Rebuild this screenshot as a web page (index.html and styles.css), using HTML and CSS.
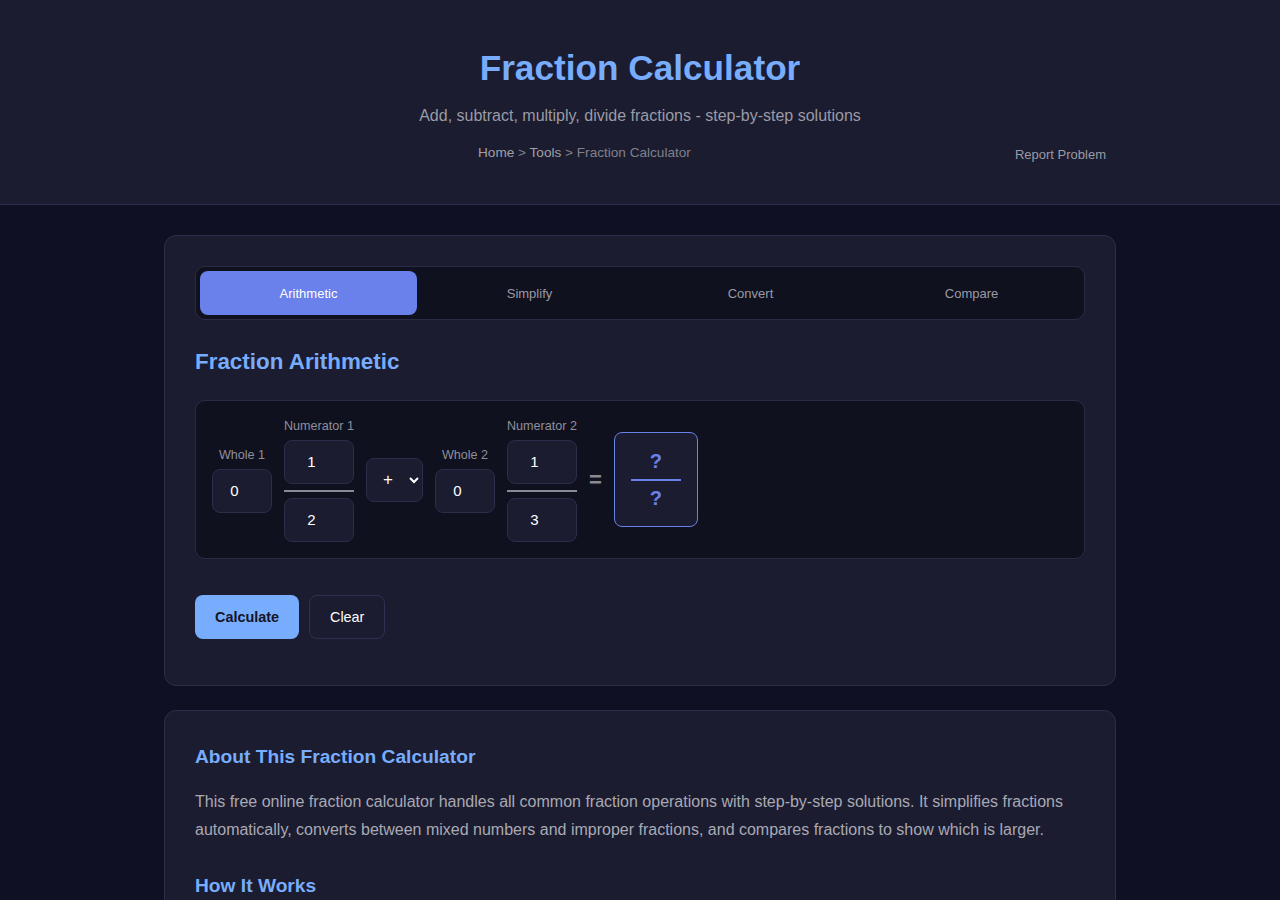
FILE: index.html
```html
<!DOCTYPE html>
<html lang="en">
<head>
  <meta charset="UTF-8">
  <meta name="viewport" content="width=device-width, initial-scale=1.0">
  <title>Fraction Calculator</title>
  <link rel="stylesheet" href="styles.css">
</head>
<body>

<header class="site-header">
  <h1>Fraction Calculator</h1>
  <p class="subtitle">Add, subtract, multiply, divide fractions - step-by-step solutions</p>
  <div class="header-row">
    <nav class="breadcrumb">
      <a href="#">Home</a> &gt; <a href="#">Tools</a> &gt; <span>Fraction Calculator</span>
    </nav>
    <button class="report-btn">Report Problem</button>
  </div>
</header>

<main class="container">
  <section class="card">
    <div class="tabs">
      <button class="tab active">Arithmetic</button>
      <button class="tab">Simplify</button>
      <button class="tab">Convert</button>
      <button class="tab">Compare</button>
    </div>

    <h2 class="section-title">Fraction Arithmetic</h2>

    <div class="calc-box">
      <div class="field">
        <label>Whole 1</label>
        <input type="number" class="num-input whole" value="0">
      </div>
      <div class="field">
        <label>Numerator 1</label>
        <input type="number" class="num-input frac" value="1">
        <div class="frac-line"></div>
        <input type="number" class="num-input frac" value="2">
      </div>
      <select class="op-select">
        <option>+</option>
        <option>−</option>
        <option>×</option>
        <option>÷</option>
      </select>
      <div class="field">
        <label>Whole 2</label>
        <input type="number" class="num-input whole" value="0">
      </div>
      <div class="field">
        <label>Numerator 2</label>
        <input type="number" class="num-input frac" value="1">
        <div class="frac-line"></div>
        <input type="number" class="num-input frac" value="3">
      </div>
      <span class="equals">=</span>
      <div class="result">
        <span>?</span>
        <div class="result-line"></div>
        <span>?</span>
      </div>
    </div>

    <div class="actions">
      <button class="btn btn-primary">Calculate</button>
      <button class="btn btn-ghost">Clear</button>
    </div>
  </section>

  <section class="card about">
    <h3>About This Fraction Calculator</h3>
    <p>This free online fraction calculator handles all common fraction operations with step-by-step solutions. It simplifies fractions automatically, converts between mixed numbers and improper fractions, and compares fractions to show which is larger.</p>
    <h3>How It Works</h3>
    <p>Enter the whole number, numerator and denominator of each fraction, pick an operation and press Calculate. The answer is reduced to lowest terms and shown as a mixed number where possible.</p>
  </section>
</main>

</body>
</html>
```

FILE: styles.css
```css
body {
  font-family: "Liberation Sans", Arial, sans-serif;
  background-color: #0f1023;
  color: #e6e6f0;
  margin: 0;
  padding: 0;
}
.site-header {
  background-color: #1b1c2f;
  border-bottom: 1px solid #2c2d4d;
  text-align: center;
  padding: 47px 20px 39px;
}
.site-header h1 {
  font-size: 35.2px;
  line-height: 1.2;
  color: #78acfc;
  margin: 0 0 17px;
}
.subtitle {
  font-size: 16px;
  line-height: 1.2;
  color: #9a9aa6;
  margin: 0 0 17px;
}
.header-row {
  display: flex;
  align-items: flex-start;
  max-width: 952px;
  margin: 0 auto;
}
.breadcrumb {
  flex: 1;
  font-size: 13.6px;
  line-height: 21px;
  color: #80808c;
}
.breadcrumb a {
  color: #a0a0ab;
  text-decoration: none;
}
.report-btn {
  font-family: inherit;
  font-size: 13px;
  color: #9a9aa6;
  background: none;
  border: none;
  padding: 3px 10px;
  margin-top: 2px;
  cursor: pointer;
}
.container {
  max-width: 952px;
  margin: 30px auto;
}
.card {
  background-color: #1b1c2f;
  border: 1px solid #2c2d4a;
  border-radius: 12px;
  padding: 30px 30px 46px;
  margin-bottom: 24px;
}
.tabs {
  display: grid;
  grid-template-columns: repeat(4, 1fr);
  gap: 4px;
  padding: 4px;
  background-color: #10111f;
  border: 1px solid #2a2b47;
  border-radius: 10px;
}
.tab {
  font-family: inherit;
  font-size: 13px;
  color: #9a9aa6;
  background: none;
  border: none;
  border-radius: 8px;
  height: 44px;
  cursor: pointer;
}
.tab.active {
  background-color: #6a80ea;
  color: #fff;
}
.section-title {
  font-size: 22.4px;
  color: #78acfc;
  margin: 29px 0 24px;
  line-height: 1.2;
}
.calc-box {
  display: flex;
  align-items: center;
  gap: 12px;
  padding: 16px;
  background-color: #10111f;
  border: 1px solid #2a2b47;
  border-radius: 10px;
}
.field {
  display: flex;
  flex-direction: column;
  align-items: center;
}
.field label {
  font-size: 12.6px;
  color: #8f8f9c;
  line-height: 18px;
  margin-bottom: 5px;
  white-space: nowrap;
}
.num-input {
  font-family: inherit;
  font-size: 15px;
  color: #fff;
  background-color: #1b1c2f;
  border: 1px solid #2c2d4a;
  border-radius: 8px;
  height: 44px;
  padding: 0 10px 1px;
  box-sizing: border-box;
  text-align: center;
}
.num-input.whole {
  width: 60px;
}
.num-input.frac {
  width: 70px;
}
.frac-line {
  width: 70px;
  height: 2px;
  background-color: #8a8a94;
  margin: 6px 0;
}
.op-select {
  font-family: inherit;
  font-size: 17px;
  color: #fff;
  background-color: #1b1c2f;
  border: 1px solid #2c2d4a;
  border-radius: 8px;
  height: 44px;
  width: 57px;
  padding: 0 6px 0 12px;
}
.equals {
  font-size: 22px;
  font-weight: bold;
  color: #8a8a94;
}
.result {
  display: flex;
  flex-direction: column;
  align-items: center;
  justify-content: center;
  width: 84px;
  height: 95px;
  box-sizing: border-box;
  border: 1px solid #6a80ea;
  border-radius: 8px;
  background-color: #1b1c2f;
  color: #6a80ea;
  font-size: 20px;
  font-weight: bold;
}
.result-line {
  width: 50px;
  height: 2px;
  background-color: #6a80ea;
  margin: 6px 0;
}
.actions {
  display: flex;
  gap: 10px;
  margin-top: 36px;
}
.btn {
  font-family: inherit;
  font-size: 14.4px;
  height: 44px;
  padding: 0 20px;
  border-radius: 8px;
  cursor: pointer;
}
.btn-primary {
  background-color: #78acfc;
  color: #141528;
  font-weight: bold;
  border: none;
}
.btn-ghost {
  background: none;
  color: #fff;
  border: 1px solid #2f3050;
}
.about h3 {
  font-size: 19.2px;
  color: #78acfc;
  margin: 31px 0 20px;
  line-height: 1.2;
}
.about h3:first-child {
  margin-top: 4px;
}
.about p {
  font-size: 16px;
  line-height: 1.7;
  color: #a9a9b4;
  margin: 0;
}
```
